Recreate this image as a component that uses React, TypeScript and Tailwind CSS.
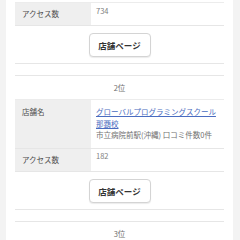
const FONT = { fontFamily: '"Noto Sans CJK JP", "Noto Sans", sans-serif' };

function ShopButton() {
  return (
    <div className="flex justify-center pt-[7px] pb-[6px] border-b border-[#e6e6e6]">
      <button className="w-[62px] h-[24px] rounded-[4px] border border-[#d4d4d4] bg-white shadow-[0_1px_1px_rgba(0,0,0,0.08)] text-[8.5px] font-bold text-[#333] leading-none">
        店舗ページ
      </button>
    </div>
  );
}

export default function App() {
  return (
    <div className="w-[240px] h-[240px] overflow-hidden bg-[#f3f3f3] pl-[6px] pr-[7px]" style={FONT}>
      <div className="bg-white h-full px-[9px] pt-[2px]">

        {/* 1位 (tail) */}
        <div className="border-t border-[#ececec]">
          <div className="flex h-[23px] border-b border-[#e6e6e6]">
            <div className="w-[76px] shrink-0 bg-[#efefef] pl-[7px] pt-[5px] text-[7.5px] text-[#4d4d4d] leading-[11px]">アクセス数</div>
            <div className="pl-[5px] pt-[2px] text-[7.5px] text-[#808080] leading-[11px]">734</div>
          </div>
        </div>
        <ShopButton />
        <div className="h-[12px] border-b border-[#e6e6e6]" />

        {/* 2位 */}
        <div className="h-[23px] flex items-center justify-center text-[7.5px] text-[#707070]">2位</div>
        <div className="border-t border-[#ececec]">
          <div className="flex h-[49px] border-b border-[#e6e6e6]">
            <div className="w-[76px] shrink-0 bg-[#efefef] pl-[7px] pt-[6px] text-[7.5px] text-[#4d4d4d] leading-[11px]">店舗名</div>
            <div className="pl-[5px] pr-[8px] pt-[6px] text-[7.5px] leading-[11.5px]">
              <a className="text-[#4a6cc0] underline">グローバルプログラミングスクール那覇校</a>
              <div className="text-[#707070]">市立病院前駅(沖縄) 口コミ件数0件</div>
            </div>
          </div>
          <div className="flex h-[23px] border-b border-[#e6e6e6]">
            <div className="w-[76px] shrink-0 bg-[#efefef] pl-[7px] pt-[5px] text-[7.5px] text-[#4d4d4d] leading-[11px]">アクセス数</div>
            <div className="pl-[5px] pt-[1px] text-[7.5px] text-[#808080] leading-[11px]">182</div>
          </div>
        </div>
        <ShopButton />
        <div className="h-[12px] border-b border-[#e6e6e6]" />

        {/* 3位 */}
        <div className="h-[23px] flex items-center justify-center text-[7.5px] text-[#707070]">3位</div>
      </div>
    </div>
  );
}
